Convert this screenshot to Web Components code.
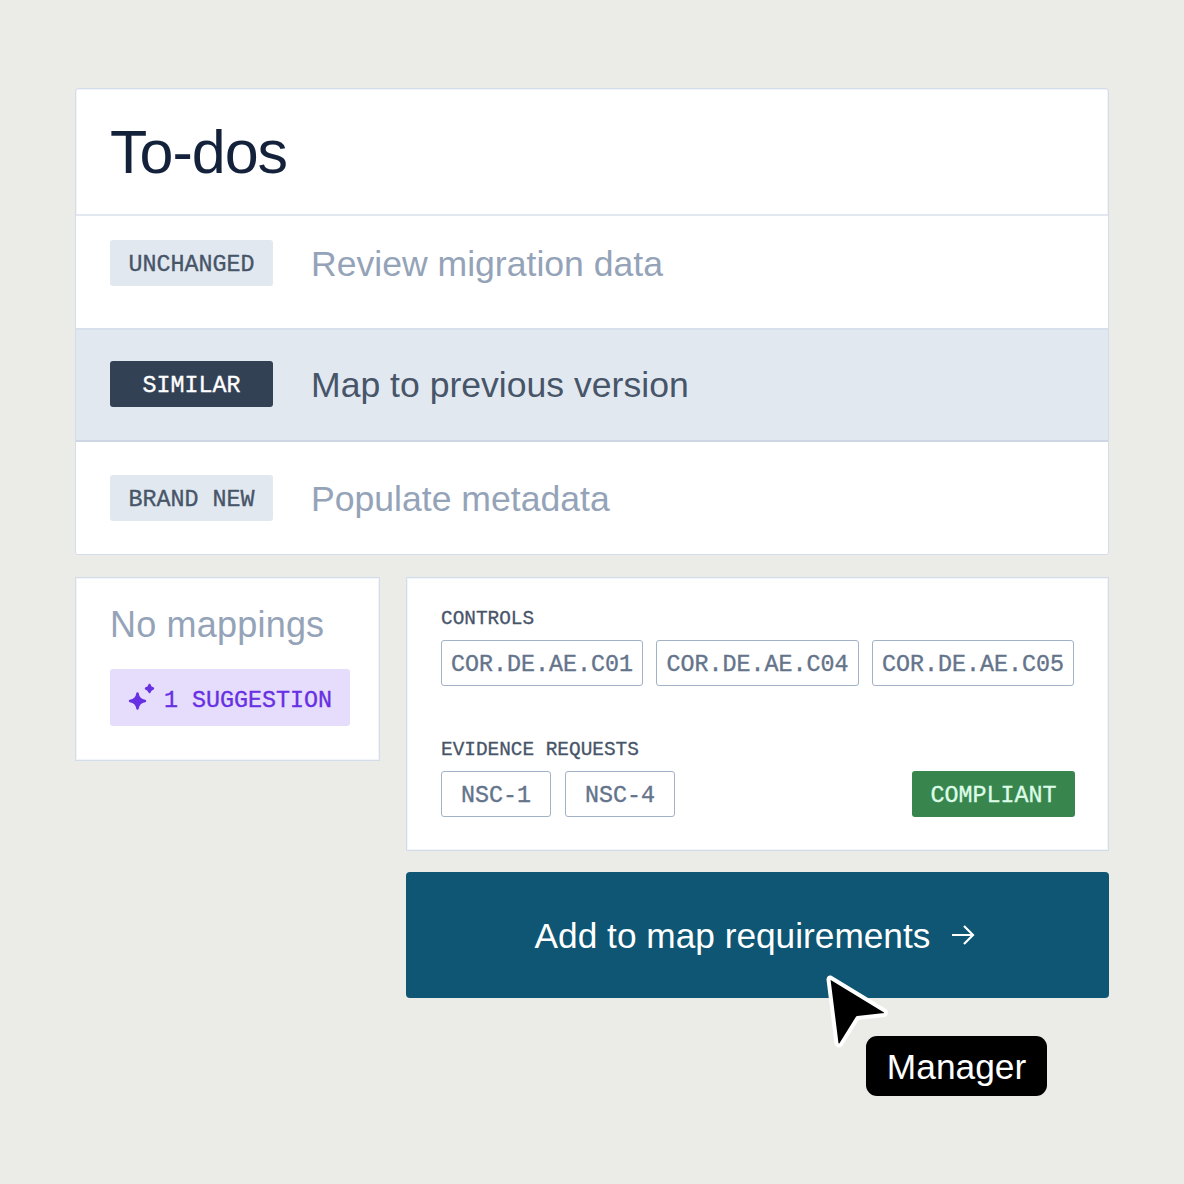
<!DOCTYPE html>
<html><head><meta charset="utf-8"><style>
html,body{margin:0;padding:0;background:#ebebe7}
body{font-family:"Liberation Sans",Arial,sans-serif}
</style></head><body>
<app-frame>
  <todo-card title="To-dos">
    <todo-row slot="rows" tag="UNCHANGED" kind="first">Review migration data</todo-row>
    <todo-row slot="rows" tag="SIMILAR" kind="active">Map to previous version</todo-row>
    <todo-row slot="rows" tag="BRAND NEW" kind="last">Populate metadata</todo-row>
  </todo-card>
  <mapping-card slot="left"></mapping-card>
  <detail-card slot="right"></detail-card>
  <action-button slot="right">Add to map requirements</action-button>
  <manager-cursor slot="overlay"></manager-cursor>
</app-frame>
<script>
const MONO='"Liberation Mono","DejaVu Sans Mono",monospace';
const EDGE='border:1px solid #d3dce9;box-shadow:inset 0 0 0 1px #f1f4f8;';
function def(name,html,init){customElements.define(name,class extends HTMLElement{constructor(){super();this.attachShadow({mode:'open'}).innerHTML=html;}connectedCallback(){init&&init(this,this.shadowRoot);}});}
def('app-frame',`<style>
:host{display:block;position:relative;width:1184px;height:1184px;box-sizing:border-box;padding:88px 75px 0}
.lower{display:grid;grid-template-columns:305px 703px;column-gap:26px;margin-top:22px;align-items:start}
.right{display:flex;flex-direction:column;gap:21px}
</style><slot></slot><div class="lower"><div><slot name="left"></slot></div><div class="right"><slot name="right"></slot></div></div><slot name="overlay"></slot>`);
def('todo-card',`<style>
:host{display:block;background:#fff;${EDGE}border-radius:3px;box-sizing:border-box;height:467px;overflow:hidden}
h1{margin:0;height:125px;box-sizing:border-box;padding:28px 0 0 34px;font:400 61px/70px "Liberation Sans",Arial,sans-serif;letter-spacing:-1px;color:#14213a}
</style><h1></h1><slot name="rows"></slot>`,(h,s)=>{s.querySelector('h1').textContent=h.getAttribute('title')});
def('x-tag',`<style>
:host{display:inline-flex;align-items:center;justify-content:center;box-sizing:border-box;height:46px;padding-top:6px;border-radius:3px;font:400 23.33px/1 ${MONO};-webkit-text-stroke:.35px currentColor;white-space:pre}
:host([variant=soft]){width:163px;background:#e2e8f0;color:#475569}
:host([variant=dark]){width:163px;background:#334155;color:#fff}
:host([variant=outline]){border:1px solid #a3b1c6;color:#64748b;background:#fff}
:host([variant=green]){width:163px;background:#38854d;color:#dcfce7}
</style><slot></slot>`);
def('todo-row',`<style>
:host{display:flex;align-items:center;gap:38px;box-sizing:border-box;height:114px;padding:0 34px;border-top:2px solid #e2e8f0;font:400 35.6px/46px "Liberation Sans",Arial,sans-serif;color:#94a3b8;background:#fff}
:host([kind=first]){padding-bottom:18px}
:host([kind=active]){background:#e2e8f0;color:#475569;border-top-color:#d8e0eb;border-bottom:2px solid #ced6e3;padding-bottom:2px}
:host([kind=last]){border-top:0;height:112px}
span{padding-top:2px}
</style><x-tag></x-tag><span><slot></slot></span>`,(h,s)=>{const t=s.querySelector('x-tag');t.textContent=h.getAttribute('tag');t.setAttribute('variant',h.getAttribute('kind')=='active'?'dark':'soft');});
def('mapping-card',`<style>
:host{display:block;box-sizing:border-box;height:184px;background:#fff;${EDGE}padding:24px 0 0 34px}
p{margin:0;font:400 36px/46px "Liberation Sans",Arial,sans-serif;letter-spacing:.2px;color:#94a3b8}
.s{display:flex;align-items:center;box-sizing:border-box;width:240px;height:57px;margin-top:21px;padding-left:17px;background:#e6dcfb;border-radius:3px;color:#6730e3;font:400 23.33px/1 ${MONO};-webkit-text-stroke:.35px currentColor;white-space:pre}
.s span{padding-top:8px}
svg{display:block;margin-right:8px;flex:none}
</style><p>No mappings</p><div class="s"><svg width="29" height="29" viewBox="0 0 29 29"><path fill="#6730e3" stroke="#6730e3" stroke-width="2.400" stroke-linejoin="round" d="M10.500 10.500Q11.500 17 18 18 11.500 19 10.500 25.500 9.500 19 3 18 9.500 17 10.500 10.500ZM22.500 2Q23.200 4.800 26 5.500 23.200 6.200 22.500 9 21.800 6.200 19 5.500 21.800 4.800 22.500 2Z"/></svg><span>1 SUGGESTION</span></div>`);
def('detail-card',`<style>
:host{display:block;box-sizing:border-box;height:274px;background:#fff;${EDGE}padding:30px 34px 0}
.l{font:400 19.4px/22px ${MONO};-webkit-text-stroke:.3px currentColor;color:#475569;margin-bottom:10px;white-space:pre;padding-top:0}
.r{display:flex;gap:13px;align-items:center}
.gap{margin-top:53px;margin-bottom:10px}
.sp{flex:1}
x-tag.c{width:203px}
x-tag.n{width:110px}
.r2{gap:14px}
</style><div class="l">CONTROLS</div><div class="r"><x-tag class="c" variant="outline" style="width:202px">COR.DE.AE.C01</x-tag><x-tag class="c" variant="outline">COR.DE.AE.C04</x-tag><x-tag class="c" variant="outline" style="width:202px">COR.DE.AE.C05</x-tag></div>
<div class="l gap">EVIDENCE REQUESTS</div><div class="r r2"><x-tag class="n" variant="outline">NSC-1</x-tag><x-tag class="n" variant="outline">NSC-4</x-tag><span class="sp"></span><x-tag variant="green" style="margin-right:-1px">COMPLIANT</x-tag></div>`);
def('action-button',`<style>
:host{display:flex;align-items:center;justify-content:center;gap:21px;box-sizing:border-box;height:126px;background:#0e5673;border-radius:4px;color:#fff;font:400 35.25px/46px "Liberation Sans",Arial,sans-serif;padding-right:5px}
span{padding-top:2px}
svg{display:block;flex:none}
</style><span><slot></slot></span><svg width="24" height="24" viewBox="0 0 24 24" fill="none" stroke="#fff" stroke-width="2.200"><path d="M1 12h21M13 3l9 9-9 9"/></svg>`);
def('manager-cursor',`<style>
:host{display:block;position:absolute;left:0;top:0;width:0;height:0}
svg{position:absolute;left:815px;top:965px}
.b{position:absolute;left:866px;top:1036px;width:181px;height:60px;box-sizing:border-box;padding-top:2px;display:flex;align-items:center;justify-content:center;background:#000;color:#fff;border-radius:11px;font:400 35.3px/46px "Liberation Sans",Arial,sans-serif}
</style><svg width="85" height="90" viewBox="815 965 85 90"><path d="M830.500 977.500 L885.500 1011 Q887 1013.500 884.500 1015 L857.500 1018 L841 1044.500 Q838 1047 836.500 1043.500 L828.500 979.500 Q829 977 830.500 977.500Z" fill="#000" stroke="#fff" stroke-width="4" stroke-linejoin="round"/></svg><div class="b">Manager</div>`);
</script></body></html>
